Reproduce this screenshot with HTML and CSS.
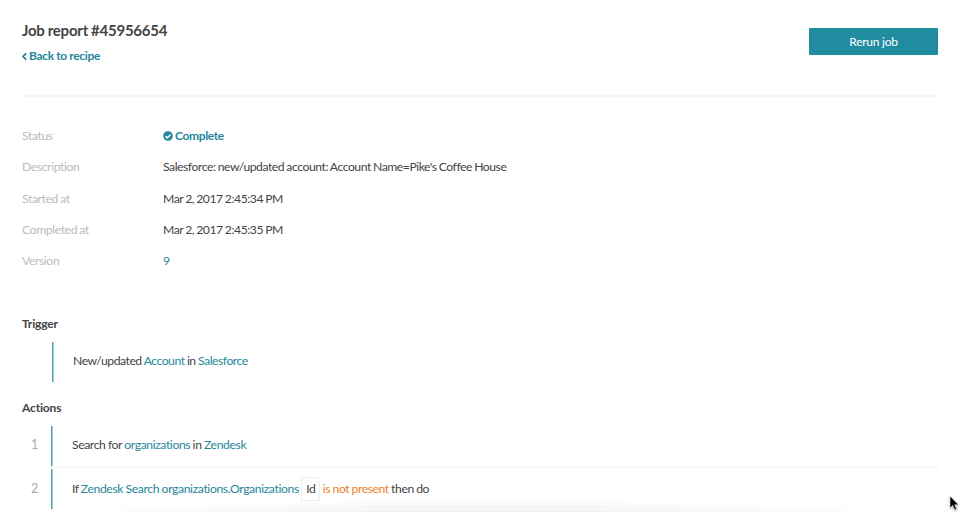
FILE: index.html
```html
<!DOCTYPE html>
<html lang="en">
<head>
<meta charset="utf-8">
<title>Job report</title>
<link rel="stylesheet" href="styles.css">
</head>
<body>
<main class="page">
  <header class="header">
    <div>
      <h1 class="title">Job report #45956654</h1>
      <a class="back"><svg class="chevron" viewBox="0 0 5 8"><path d="M4.200 .8 1 4l3.200 3.200"/></svg>Back to recipe</a>
    </div>
    <button class="rerun">Rerun job</button>
  </header>
  <dl class="details">
    <dt>Status</dt><dd class="complete"><svg class="check" viewBox="0 0 10 10"><circle cx="5" cy="5" r="4.800"/><path d="M2.500 5.100 4.300 6.900 7.600 3.500"/></svg>Complete</dd>
    <dt>Description</dt><dd>Salesforce: new/updated account: Account Name=Pike's Coffee House</dd>
    <dt>Started at</dt><dd>Mar 2, 2017 2:45:34 PM</dd>
    <dt>Completed at</dt><dd>Mar 2, 2017 2:45:35 PM</dd>
    <dt>Version</dt><dd><a>9</a></dd>
  </dl>
  <h2 class="heading trigger-heading">Trigger</h2>
  <div class="step trigger"><span class="number"></span><div class="card"><p>New/updated <a>Account</a> in <a>Salesforce</a></p></div></div>
  <h2 class="heading actions-heading">Actions</h2>
  <div class="step"><span class="number">1</span><div class="card"><p>Search for <a>organizations</a> in <a>Zendesk</a></p></div></div>
  <div class="step"><span class="number">2</span><div class="card"><p>If <a class="source">Zendesk Search organizations.Organizations</a> <span class="pill">Id</span> <span class="condition">is not present</span> then do</p></div></div>
</main>
<div class="shade"></div>
<svg class="cursor" viewBox="0 0 10 16"><path d="M1 1v12l2.800-2.600L5.700 15l2-.8-1.900-4.400h3.700z"/></svg>
</body>
</html>
```

FILE: styles.css
```css
* { box-sizing: border-box; }
body { margin: 0; background: #fff; color: #444; font: 12.2px/16px Lato, sans-serif; letter-spacing: -.44px; word-spacing: -.3px; overflow: hidden; height: 512px; }
h1, h2, p, dl, dd { margin: 0; }
a { color: #1f8799; }
.page { padding: 0 22px; }
.header { display: flex; justify-content: space-between; height: 97px; padding-top: 20px; border-bottom: 2px solid #f7f7f7; }
.title { font-size: 15px; line-height: 21px; font-weight: 700; letter-spacing: -.24px; }
.back { display: flex; align-items: center; margin-top: 7px; font-size: 12px; font-weight: 700; letter-spacing: -.3px; }
.chevron { width: 5px; height: 9px; margin-right: 2px; fill: none; stroke: currentColor; stroke-width: 1.700; }
.rerun { width: 129px; height: 27px; margin-top: 8px; border: 0; border-radius: 1px; background: #1f8c9f; color: #fff; font: 12px Lato, sans-serif; letter-spacing: -.25px; word-spacing: 0; }
.details { display: grid; grid-template-columns: 141px 1fr; grid-auto-rows: 31.100px; margin-top: 23.350px; line-height: 31px; letter-spacing: -.460px; word-spacing: -.5px; }
.details dt { color: #bbb; letter-spacing: -.4px; }
.details .complete { display: flex; align-items: center; color: #1f8799; font-size: 12px; font-weight: 700; letter-spacing: -.35px; }
.check { width: 10px; height: 10px; margin-right: 2px; fill: #1f8799; }
.check path { fill: none; stroke: #fff; stroke-width: 1.500; }
.heading { font-size: 12px; line-height: 16px; font-weight: 700; letter-spacing: -.15px; }
.trigger-heading { margin-top: 40.150px; }
.trigger { margin-top: 8px; }
.actions-heading { margin-top: 17px; }
.step { display: flex; align-items: center; height: 43px; padding-left: 9px; }
.actions-heading + .step { margin-top: 8px; letter-spacing: -.4px; }
.number { width: 20px; color: #aaa; font-size: 12.500px; }
.card { flex: 1; display: flex; align-items: center; height: 43px; padding-left: 21px; border: 1px solid #fafafa; border-left: 0; background: linear-gradient(#4b9fae, #4b9fae) 0 1px / 1.500px 40px no-repeat; }
.trigger { letter-spacing: -.480px; }
.trigger .number { width: 21px; }
.actions-heading + .step + .step { margin-top: .5px; }
.source { letter-spacing: -.380px; }
.pill { display: inline-block; padding: 3px 4px; border: 1px solid #eee; border-radius: 1px; }
.condition { color: #ee812b; }
.shade { position: absolute; left: 100px; right: 90px; bottom: 0; height: 12px; background: radial-gradient(ellipse 50% 100% at 50% 100%, #eee, rgba(238,238,238,0)); z-index: -1; }
.cursor { position: absolute; left: 949px; top: 495px; width: 10px; height: 16px; stroke: #fff; stroke-width: .6; filter: drop-shadow(0 1px 1px #aaa); }
```
